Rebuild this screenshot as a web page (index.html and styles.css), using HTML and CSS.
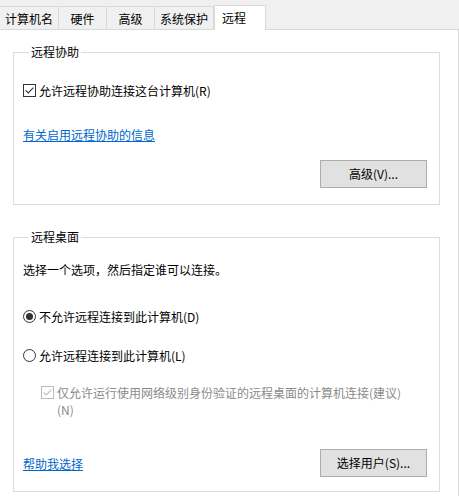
FILE: index.html
```html
<!DOCTYPE html>
<html lang="zh-CN">
<head>
<meta charset="utf-8">
<title>系统属性 - 远程</title>
<link rel="stylesheet" href="styles.css">
</head>
<body>
<div class="tabs">
  <div class="tab tab-wide">计算机名</div>
  <div class="tab">硬件</div>
  <div class="tab">高级</div>
  <div class="tab tab-wide">系统保护</div>
  <div class="tab active">远程</div>
</div>
<div class="panel">
  <fieldset class="group group-assist">
    <legend>远程协助</legend>
    <div class="row check-row first-row">
      <svg class="box" width="13" height="13" viewBox="0 0 13 13"><rect x="0.5" y="0.5" width="12" height="12" fill="#fff" stroke="#333"/><path d="M2.6 6.4 L5.2 9 L10.4 3.6" fill="none" stroke="#333" stroke-width="1.1"/></svg>
      <span>允许远程协助连接这台计算机(R)</span>
    </div>
    <div class="row link-row"><a class="link" href="#">有关启用远程协助的信息</a></div>
    <div class="btn-row btn-row-assist"><button class="btn">高级(V)...</button></div>
  </fieldset>

  <fieldset class="group group-desktop">
    <legend>远程桌面</legend>
    <div class="row desc">选择一个选项，然后指定谁可以连接。</div>
    <div class="row check-row radio-first">
      <svg class="box" width="13" height="13" viewBox="0 0 13 13"><circle cx="6.5" cy="6.5" r="6" fill="#fff" stroke="#333"/><circle cx="6.5" cy="6.5" r="3.5" fill="#333"/></svg>
      <span>不允许远程连接到此计算机(D)</span>
    </div>
    <div class="row check-row radio-second">
      <svg class="box" width="13" height="13" viewBox="0 0 13 13"><circle cx="6.5" cy="6.5" r="6" fill="#fff" stroke="#333"/></svg>
      <span>允许远程连接到此计算机(L)</span>
    </div>
    <div class="check-row disabled">
      <svg class="box box-top" width="13" height="13" viewBox="0 0 13 13"><rect x="0.5" y="0.5" width="12" height="12" fill="#fff" stroke="#bcbcbc"/><path d="M2.6 6.4 L5.2 9 L10.4 3.6" fill="none" stroke="#bcbcbc" stroke-width="1.1"/></svg>
      <span class="wrap-text">仅允许运行使用网络级别身份验证的远程桌面的计算机连接(建议)<br>(N)</span>
    </div>
    <div class="btn-row btn-row-desktop">
      <a class="link" href="#">帮助我选择</a>
      <button class="btn">选择用户(S)...</button>
    </div>
  </fieldset>
</div>
</body>
</html>
```

FILE: styles.css
```css
html, body {
  margin: 0;
  padding: 0;
}
body {
  width: 459px;
  height: 496px;
  overflow: hidden;
  background: #f0f0f0;
  font-family: "Noto Sans CJK SC", "Noto Sans", sans-serif;
  font-size: 12px;
  color: #000;
}
.tabs {
  display: flex;
  align-items: flex-end;
  height: 29px;
}
.tab {
  box-sizing: border-box;
  width: 48px;
  height: 23px;
  border-top: 1px solid #d9d9d9;
  border-right: 1px solid #d9d9d9;
  background: #f0f0f0;
  display: flex;
  align-items: center;
  justify-content: center;
  line-height: 16px;
  padding-top: 1px;
}
.tab-wide {
  width: 59px;
}
.tab.active {
  width: 52px;
  height: 25px;
  margin-bottom: -1px;
  background: #fff;
  border-left: 1px solid #d9d9d9;
  position: relative;
  z-index: 1;
  justify-content: flex-start;
  padding-left: 7px;
  padding-top: 0;
}
.panel {
  box-sizing: border-box;
  width: 459px;
  height: 467px;
  background: #fff;
  border-top: 1px solid #d9d9d9;
  border-right: 1px solid #d9d9d9;
  padding: 14px 18px 0 13px;
}
.group {
  margin: 0;
  border: 1px solid #dcdcdc;
  padding: 0 12px 0 9px;
  min-width: 0;
}
.group legend {
  margin-left: 6px;
  padding: 0 2px;
  line-height: 16px;
  font-size: 12px;
}
.group-assist {
  padding-bottom: 16px;
}
.group-desktop {
  margin-top: 24px;
  padding-bottom: 14px;
}
.row {
  line-height: 17px;
}
.check-row {
  display: flex;
  align-items: center;
  gap: 3px;
  line-height: 17px;
}
.box {
  flex: none;
  display: block;
}
.first-row {
  margin-top: 22px;
}
.link-row {
  margin-top: 27px;
}
.link {
  color: #0066cc;
  text-decoration: underline;
  line-height: 17px;
}
.btn-row {
  display: flex;
  align-items: center;
  justify-content: flex-end;
}
.btn-row-assist {
  margin-top: 17px;
}
.btn-row-desktop {
  margin-top: 31px;
  justify-content: space-between;
}
.btn {
  box-sizing: border-box;
  width: 107px;
  height: 28px;
  background: #e1e1e1;
  border: 1px solid #adadad;
  font-family: "Noto Sans CJK SC", "Noto Sans", sans-serif;
  font-size: 12px;
  color: #000;
  padding: 0;
  line-height: 16px;
}
.desc {
  margin-top: 16px;
}
.radio-first {
  margin-top: 30px;
}
.radio-second {
  margin-top: 22px;
}
.disabled {
  margin-top: 20px;
  margin-left: 18px;
  align-items: flex-start;
  color: #8a8a8a;
}
.box-top {
  margin-top: 2px;
}
.wrap-text {
  line-height: 17px;
}
```
